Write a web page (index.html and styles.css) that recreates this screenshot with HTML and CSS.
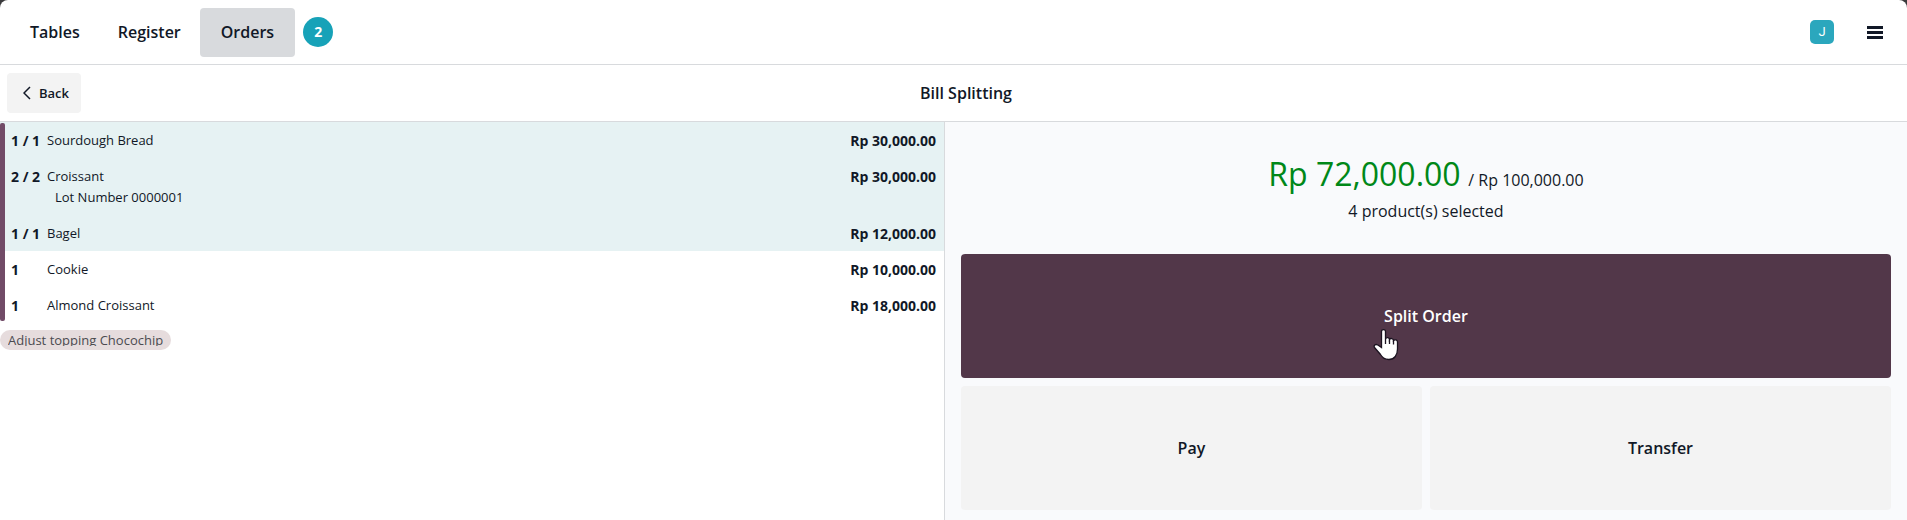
FILE: index.html
```
<!DOCTYPE html>
<html lang="en">
<head>
  <meta charset="UTF-8" />
  <meta name="viewport" content="width=device-width, initial-scale=1.0"/>
  <title>Bill Splitting</title>
  <link rel="stylesheet" href="styles.css">
</head>
<body>
  <div class="pos">

    <header class="navbar">
      <nav class="tabs">
        <button class="tab">Tables</button>
        <button class="tab">Register</button>
        <button class="tab active">Orders</button>
        <span class="count">2</span>
      </nav>
      <div class="tools">
        <span class="avatar">J</span>
        <button class="menu" aria-label="Menu">
          <svg width="16" height="13" viewBox="0 0 16 13"><path fill="currentColor" d="M0 0h16v3H0zM0 5h16v3H0zM0 10h16v3H0z"/></svg>
        </button>
      </div>
    </header>

    <div class="subheader">
      <button class="back">
        <svg width="8" height="14" viewBox="0 0 8 14"><path d="M7 1L1 7l6 6" fill="none" stroke="currentColor" stroke-width="1.5"/></svg>
        Back
      </button>
      <h1 class="title">Bill Splitting</h1>
    </div>

    <main class="content">
      <section class="order">
        <ul class="lines">
          <li class="line selected">
            <span class="qty">1 / 1</span>
            <span class="name">Sourdough Bread</span>
            <span class="price">Rp 30,000.00</span>
          </li>
          <li class="line selected">
            <span class="qty">2 / 2</span>
            <div class="name">Croissant
              <div class="lot">Lot Number 0000001</div>
            </div>
            <span class="price">Rp 30,000.00</span>
          </li>
          <li class="line selected">
            <span class="qty">1 / 1</span>
            <span class="name">Bagel</span>
            <span class="price">Rp 12,000.00</span>
          </li>
          <li class="line">
            <span class="qty">1</span>
            <span class="name">Cookie</span>
            <span class="price">Rp 10,000.00</span>
          </li>
          <li class="line">
            <span class="qty">1</span>
            <span class="name">Almond Croissant</span>
            <span class="price">Rp 18,000.00</span>
          </li>
        </ul>
        <div class="note"><span class="note-text">Adjust topping Chocochip</span></div>
      </section>

      <section class="controls">
        <div class="summary">
          <div class="totals">
            <span class="amount">Rp 72,000.00</span>
            <span class="total">/ Rp 100,000.00</span>
          </div>
          <div class="picked">4 product(s) selected</div>
        </div>
        <div class="buttons">
          <button class="btn primary">
            Split Order
            <svg class="pointer" width="26" height="33" viewBox="0 0 26 33">
              <path d="M8.5 3.5C8.5 1 12.5 1 12.5 3.5V11C13.5 8.7 16.5 9.5 16.5 11.5C17.5 9.8 20.5 10.5 20.5 12.5C21.8 11.2 24.5 11.8 24.5 14V21C24.5 27 21.5 31.5 16 31.5C11 31.5 9.5 29.5 7.5 26.5L1.5 19.5C.3 17.5 2.5 15.8 4.5 16.8L8.5 19.5Z" fill="#fff" stroke="#1b1320" stroke-width="1.3"/>
              <path d="M12.5 11v5M16.5 11.5v4.5M20.5 12.5v4" fill="none" stroke="#1b1320" stroke-width="1.3"/>
            </svg>
          </button>
          <button class="btn">Pay</button>
          <button class="btn">Transfer</button>
        </div>
      </section>
    </main>

  </div>
</body>
</html>
```
FILE: styles.css
```
* {
  box-sizing: border-box;
}

body {
  margin: 0;
  font-family: 'Segoe UI', 'Open Sans', sans-serif;
  font-size: 14px;
  color: #111827;
  background: #3a3a3c;
}

button {
  border: none;
  background: none;
  font: inherit;
  color: inherit;
  cursor: pointer;
}

.pos {
  min-height: 100vh;
  display: flex;
  flex-direction: column;
  background: white;
  border-radius: 8px 8px 0 0;
}

/* top bar */

.navbar {
  display: flex;
  justify-content: space-between;
  align-items: center;
  height: 65px;
  padding: 0 16px 0 11px;
  border-bottom: 1px solid #d8dadd;
}

.tabs,
.tools {
  display: flex;
  align-items: center;
}

.tab {
  height: 49px;
  padding: 0 19px;
  border-radius: 4px;
  font-size: 16px;
  font-weight: 600;
}

.tab.active {
  padding: 0 21px;
  background: #d8dadd;
}

.count {
  width: 30px;
  height: 30px;
  margin-left: 8px;
  border-radius: 50%;
  background: #17a2b8;
  color: white;
  font-weight: 700;
  line-height: 30px;
  text-align: center;
}

.tools {
  gap: 25px;
}

.avatar {
  width: 24px;
  height: 24px;
  border-radius: 5px;
  background: #2ba7bd;
  color: white;
  font-family: Roboto, sans-serif;
  font-size: 13px;
  line-height: 24px;
  text-align: center;
}

.menu {
  display: flex;
  padding: 8px;
}

/* back + title */

.subheader {
  display: grid;
  grid-template-columns: 1fr auto 1fr;
  align-items: center;
  height: 57px;
  padding: 0 7px;
  border-bottom: 1px solid #d8dadd;
}

.back {
  display: flex;
  align-items: center;
  justify-self: start;
  gap: 8px;
  height: 40px;
  padding: 0 12px 0 16px;
  border-radius: 4px;
  background: #f3f3f3;
  font-size: 13px;
  font-weight: 600;
}

.title {
  margin: 0;
  padding-left: 25px;
  font-size: 16px;
  font-weight: 600;
}

.content {
  flex: 1;
  display: flex;
}

/* order lines */

.order {
  flex: 0 0 49.55%;
  border-right: 1px solid #d8dadd;
}

.lines {
  position: relative;
  margin: 0;
  padding: 0;
  list-style: none;
}

.lines::before {
  content: '';
  position: absolute;
  top: 1px;
  bottom: 2px;
  left: 0;
  width: 5px;
  border-radius: 2px;
  background: #714b67;
}

.line {
  display: flex;
  padding: 8px 8px 7px 11px;
  line-height: 21px;
}

.line.selected {
  background: #e6f2f3;
}

.qty {
  width: 36px;
  font-weight: 700;
  white-space: nowrap;
}

.name {
  flex: 1;
  font-size: 13px;
}

.lot {
  padding-left: 8px;
}

.price {
  font-weight: 700;
}

.note {
  display: inline-flex;
  margin-top: 7px;
  padding: 4px 8px;
  border-radius: 10px;
  background: #e6dcdd;
  color: #4b4b50;
  font-size: 13px;
}

.note-text {
  height: 12px;
  line-height: 12px;
  overflow: hidden;
}

/* split summary and actions */

.controls {
  flex: 1;
  display: flex;
  flex-direction: column;
  padding: 0 16px 10px;
  background: #f9fafc;
}

.summary {
  height: 132px;
  padding-top: 28px;
  text-align: center;
}

.totals {
  line-height: 40px;
}

.amount {
  margin-right: 4px;
  font-size: 32px;
  line-height: 48px;
  color: #008818;
}

.total,
.picked {
  font-size: 16px;
}

.picked {
  line-height: 20px;
}

.buttons {
  flex: 1;
  display: grid;
  grid-template-columns: 1fr 1fr;
  grid-auto-rows: 1fr;
  gap: 8px;
}

.btn {
  border-radius: 4px;
  background: #f3f3f3;
  font-size: 16px;
  font-weight: 600;
}

.btn.primary {
  position: relative;
  grid-column: 1 / -1;
  background: #523749;
  color: white;
}

.pointer {
  position: absolute;
  top: 74px;
  left: calc(50% - 53px);
}
```
